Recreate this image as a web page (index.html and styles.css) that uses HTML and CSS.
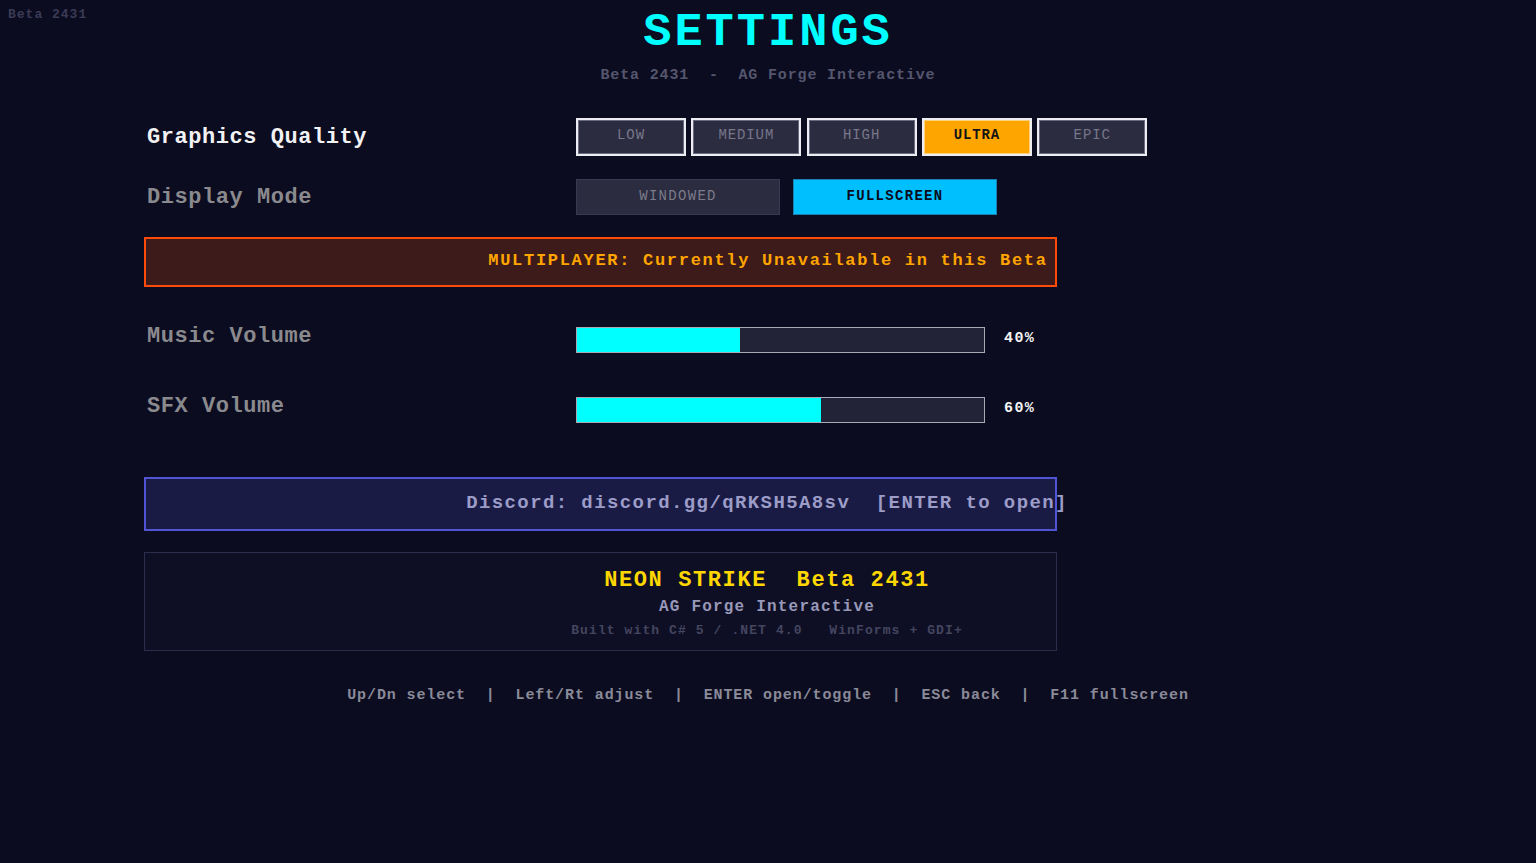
FILE: index.html
```html
<!DOCTYPE html>
<html lang="en">
<head>
<meta charset="utf-8">
<title>Settings</title>
<link rel="stylesheet" href="styles.css">
</head>
<body>
<div class="build-tag">Beta 2431</div>
<main class="screen">
  <h1 class="title">SETTINGS</h1>
  <p class="subtitle">Beta 2431  -  AG Forge Interactive</p>

  <section class="panel">
    <div class="row row-quality">
      <span class="label label-active">Graphics Quality</span>
      <div class="options">
        <span class="opt">LOW</span>
        <span class="opt">MEDIUM</span>
        <span class="opt">HIGH</span>
        <span class="opt opt-on">ULTRA</span>
        <span class="opt">EPIC</span>
      </div>
    </div>

    <div class="row row-display">
      <span class="label">Display Mode</span>
      <div class="modes">
        <span class="mode">WINDOWED</span>
        <span class="mode mode-on">FULLSCREEN</span>
      </div>
    </div>

    <div class="banner banner-warn"><span>MULTIPLAYER: Currently Unavailable in this Beta</span></div>

    <div class="row row-volume row-music">
      <span class="label label-raised">Music Volume</span>
      <div class="slider">
        <div class="track"><div class="fill" style="width:40%"></div></div>
        <span class="pct">40%</span>
      </div>
    </div>

    <div class="row row-volume row-sfx">
      <span class="label label-raised">SFX Volume</span>
      <div class="slider">
        <div class="track"><div class="fill" style="width:60%"></div></div>
        <span class="pct">60%</span>
      </div>
    </div>

    <div class="banner banner-link"><span>Discord: discord.gg/qRKSH5A8sv  [ENTER to open]</span></div>

    <div class="about">
      <div class="about-name">NEON STRIKE  Beta 2431</div>
      <div class="about-studio">AG Forge Interactive</div>
      <div class="about-tech">Built with C# 5 / .NET 4.0   WinForms + GDI+</div>
    </div>
  </section>

  <p class="hints">Up/Dn select  |  Left/Rt adjust  |  ENTER open/toggle  |  ESC back  |  F11 fullscreen</p>
</main>
</body>
</html>
```

FILE: styles.css
```css
* { box-sizing: border-box; }

html, body {
  margin: 0;
  padding: 0;
  background: #0b0c20;
  height: 100%;
  overflow: hidden;
}

body {
  font-family: "Liberation Mono", "DejaVu Sans Mono", monospace;
}

/* HUD build tag in the corner */
.build-tag {
  position: absolute;
  left: 8px;
  top: 6px;
  font-size: 13px;
  line-height: 18px;
  letter-spacing: 1px;
  color: #3a3b55;
  font-weight: bold;
}

.screen {
  display: flex;
  flex-direction: column;
  align-items: center;
  padding-top: 8px;
  white-space: pre;
}

.title {
  margin: 0;
  font-size: 47px;
  line-height: 50px;
  font-weight: bold;
  letter-spacing: 3px;
  color: #00ffff;
}

.subtitle {
  margin: 8px 0 0;
  font-size: 15px;
  line-height: 20px;
  letter-spacing: 0.85px;
  color: #55566e;
  font-weight: bold;
}

.panel {
  align-self: flex-start;
  margin-left: 144px;
  width: 913px;
  display: flex;
  flex-direction: column;
}

.row {
  display: grid;
  grid-template-columns: 429px 1fr;
  align-items: center;
  padding-left: 3px;
}

.label {
  font-size: 22px;
  letter-spacing: 0.55px;
  font-weight: bold;
  color: #8a8a8e;
}
.label-active { color: #f2f2f4; }
.label-raised {
  line-height: 20px;
  padding-bottom: 6px;
}

.row-quality { margin-top: 32px; height: 38px; }
.row-display { margin-top: 23px; height: 36px; }

.options {
  display: flex;
  gap: 5.3px;
}
.opt {
  width: 110px;
  height: 38px;
  display: flex;
  align-items: center;
  justify-content: center;
  background: #2c2c41;
  border: 2px solid #ececf2;
  box-shadow: inset 0 0 0 1px #6a6a80;
  color: #77778a;
  font-size: 14px;
  letter-spacing: 0.9px;
  padding-bottom: 4px;
}
.opt-on {
  background: #ffa500;
  color: #141414;
  font-weight: bold;
  box-shadow: inset 0 0 0 1px #ffd27a;
}

.modes {
  display: flex;
  gap: 13px;
}
.mode {
  width: 204px;
  height: 36px;
  display: flex;
  align-items: center;
  justify-content: center;
  background: #2c2c41;
  border: 1px solid #393a52;
  color: #7b7b8a;
  font-size: 14px;
  letter-spacing: 1.3px;
  padding-bottom: 3px;
}
.mode-on {
  background: #00bfff;
  border-color: #1b7fb0;
  color: #0a0c1c;
  font-weight: bold;
}

/* full-width strips; their text is centred on the screen, not the strip */
.banner {
  display: flex;
  align-items: center;
  justify-content: center;
  padding-left: 335px;
  font-weight: bold;
}
.banner-warn {
  margin-top: 22px;
  height: 50px;
  background: #3d1b1a;
  border: 2px solid #ff4a0a;
  color: #ffa500;
  font-size: 17px;
  letter-spacing: 1.7px;
  padding-bottom: 4px;
}
.banner-link {
  margin-top: 54px;
  height: 54px;
  background: #1a1b44;
  border: 2px solid #5254d6;
  color: #9c9cc8;
  font-size: 19px;
  letter-spacing: 1.4px;
  padding-left: 333px;
  padding-bottom: 3px;
}

.row-volume { height: 26px; }
.row-music { margin-top: 40px; }
.row-sfx { margin-top: 44px; }

.slider {
  display: flex;
  align-items: center;
  gap: 19px;
}
.track {
  width: 409px;
  height: 26px;
  background: #232337;
  border: 1px solid #a9a9b6;
  display: flex;
}
.fill {
  background: #00ffff;
  height: 100%;
}
.pct {
  color: #f4f4f4;
  font-size: 15px;
  font-weight: bold;
  letter-spacing: 1.4px;
  padding-bottom: 4px;
}

.about {
  margin-top: 21px;
  height: 99px;
  background: #0e0f25;
  border: 1px solid #2c2d4a;
  display: flex;
  flex-direction: column;
  align-items: center;
  padding-left: 333px;
  padding-top: 15px;
  font-weight: bold;
}
.about-name {
  color: #ffd700;
  font-size: 22px;
  line-height: 26px;
  letter-spacing: 1.6px;
}
.about-studio {
  color: #9898b8;
  font-size: 16px;
  line-height: 20px;
  letter-spacing: 1.2px;
  margin-top: 3px;
}
.about-tech {
  color: #44455f;
  font-size: 13px;
  line-height: 18px;
  letter-spacing: 1.1px;
  margin-top: 5px;
}

.hints {
  margin: 35px 0 0;
  font-size: 15px;
  line-height: 20px;
  letter-spacing: 0.9px;
  color: #8a8a98;
  font-weight: bold;
}
```
